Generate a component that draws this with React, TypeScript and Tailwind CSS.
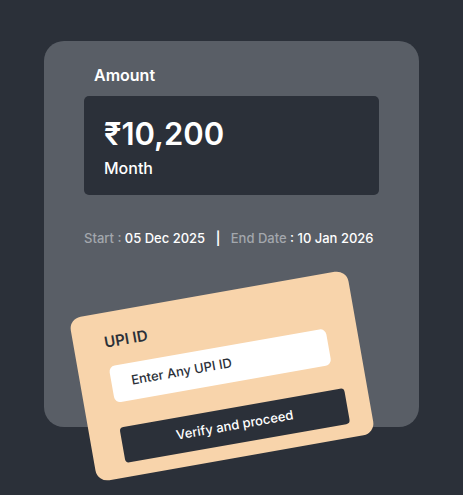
export default function App() {
  return (
    <div
      className="min-h-[495px] w-full bg-[#2b3039] pt-[41px]"
      style={{ fontFamily: "Inter, 'Noto Sans', sans-serif" }}
    >
      <div className="relative mx-auto h-[386px] w-[375px] rounded-[20px] bg-[#595e66] px-10 pt-[22px]">
        <p className="pl-[10px] text-[16px] font-semibold text-white">Amount</p>

        <div className="mt-[9px] flex h-[99px] flex-col justify-center rounded-[5px] bg-[#2b3039] px-5 pt-[5px]">
          <p className="text-[31px] font-semibold leading-9 text-white">₹10,200</p>
          <p className="mt-[4px] text-[16px] font-medium text-white">Month</p>
        </div>

        <p className="mt-[34px] text-[13px] font-medium text-white">
          <span className="text-[#a3a7ad]">Start :</span> 05 Dec 2025{" "}
          <span className="mx-[7px] font-semibold">|</span>{" "}
          <span className="text-[#a3a7ad]">End Date</span> : 10 Jan 2026
        </p>

        {/* UPI card tilted over the bottom edge */}
        <div className="absolute left-[37px] top-[252px] h-[166px] w-[282px] -rotate-10 rounded-[12px] bg-[#f8d4ab] px-[31px] pt-[19px]">
          <p className="text-[15px] font-semibold text-[#2b3039]">UPI ID</p>
          <div className="mt-[12px] flex h-[37px] items-center rounded-[6px] bg-white px-5 text-[13px] font-medium text-[#2b3039]">
            Enter Any UPI ID
          </div>
          <button className="mt-[25px] flex h-[36px] w-[228px] items-center justify-center rounded-[4px] bg-[#2b3039] text-[13px] font-medium text-white">
            Verify and proceed
          </button>
        </div>
      </div>
    </div>
  );
}
